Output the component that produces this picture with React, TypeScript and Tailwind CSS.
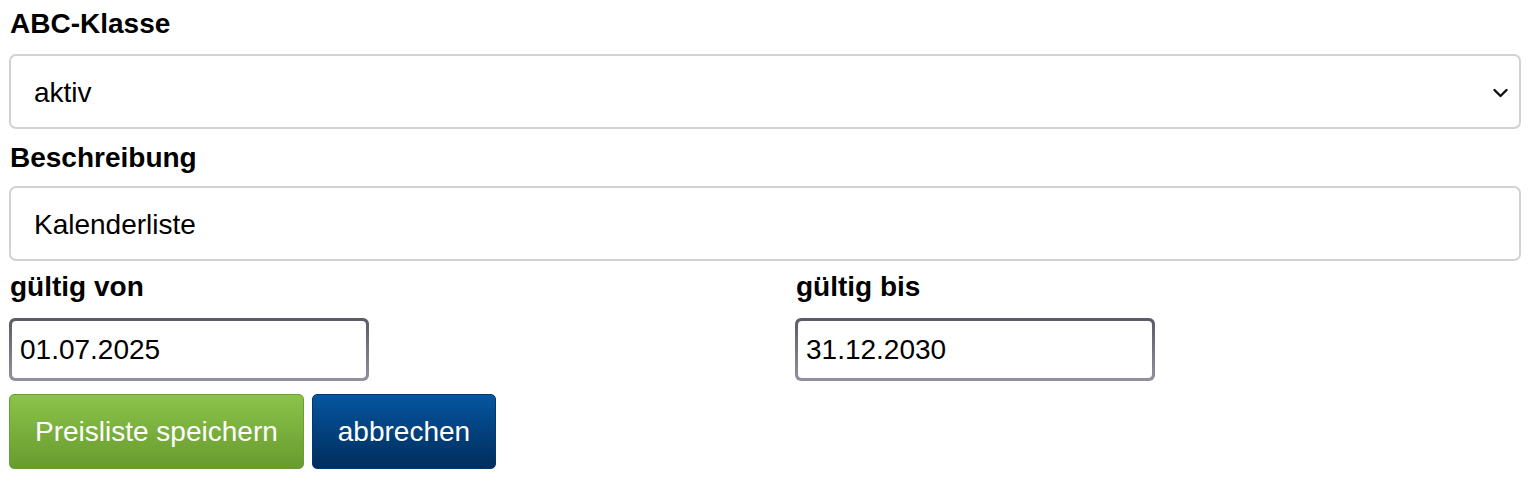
import { useState } from "react";

function DateField(props: { label: string; value: string; onChange: (v: string) => void }) {
    const { label, value, onChange } = props;
    return (
        <div className="flex flex-col">
            <label className="text-[28px] leading-[32px] font-bold text-black pl-px">{label}</label>
            <div className="mt-[15px] w-[360px] h-[63px] rounded-[6px] p-[3px] bg-linear-to-b from-[#5b5a66] to-[#92919d]">
                <input
                    type="text"
                    value={value}
                    onChange={(e) => onChange(e.target.value)}
                    className="w-full h-full rounded-[4px] bg-white pl-[8px] text-[28px] text-black outline-none"
                />
            </div>
        </div>
    );
}

function App() {
    const [abc, setAbc] = useState("aktiv");
    const [desc, setDesc] = useState("Kalenderliste");
    const [from, setFrom] = useState("01.07.2025");
    const [to, setTo] = useState("31.12.2030");

    return (
        <div className="w-[1530px] h-[481px] bg-white px-[9px] pt-[8px] font-['Liberation_Sans',Arial,sans-serif] text-black">
            <label className="block text-[28px] leading-[32px] font-bold pl-px">ABC-Klasse</label>
            <div className="relative mt-[14px]">
                <select
                    value={abc}
                    onChange={(e) => setAbc(e.target.value)}
                    className="appearance-none w-full h-[75px] rounded-[7px] border-2 border-[#d2d2d2] bg-white pl-[23px] pt-[3px] text-[28px] text-black outline-none"
                >
                    <option value="aktiv">aktiv</option>
                    <option value="inaktiv">inaktiv</option>
                </select>
                <svg className="absolute right-[13px] top-[34px] pointer-events-none" width="15" height="10" viewBox="0 0 15 10">
                    <path d="M1.5 2 L7.5 8 L13.5 2" fill="none" stroke="#111" strokeWidth="2.4" strokeLinecap="round" strokeLinejoin="round" />
                </svg>
            </div>

            <label className="block mt-[13px] text-[28px] leading-[32px] font-bold pl-px">Beschreibung</label>
            <input
                type="text"
                value={desc}
                onChange={(e) => setDesc(e.target.value)}
                className="block mt-[12px] w-full h-[75px] rounded-[7px] border-2 border-[#d2d2d2] bg-white pl-[23px] pt-[2px] text-[28px] text-black outline-none"
            />

            <div className="grid grid-cols-2 gap-x-[60px] mt-[10px]">
                <DateField label="gültig von" value={from} onChange={setFrom} />
                <DateField label="gültig bis" value={to} onChange={setTo} />
            </div>

            <div className="flex gap-[8px] mt-[13px]">
                <button className="h-[75px] px-[25px] rounded-[5px] border border-[#6c9c35] bg-linear-to-b from-[#8bc34a] to-[#689b2e] text-[28px] text-white">
                    Preisliste speichern
                </button>
                <button className="h-[75px] px-[25px] rounded-[5px] border border-[#02386f] bg-linear-to-b from-[#0656a0] to-[#012d5c] text-[28px] text-white">
                    abbrechen
                </button>
            </div>
        </div>
    );
}

export default App;
